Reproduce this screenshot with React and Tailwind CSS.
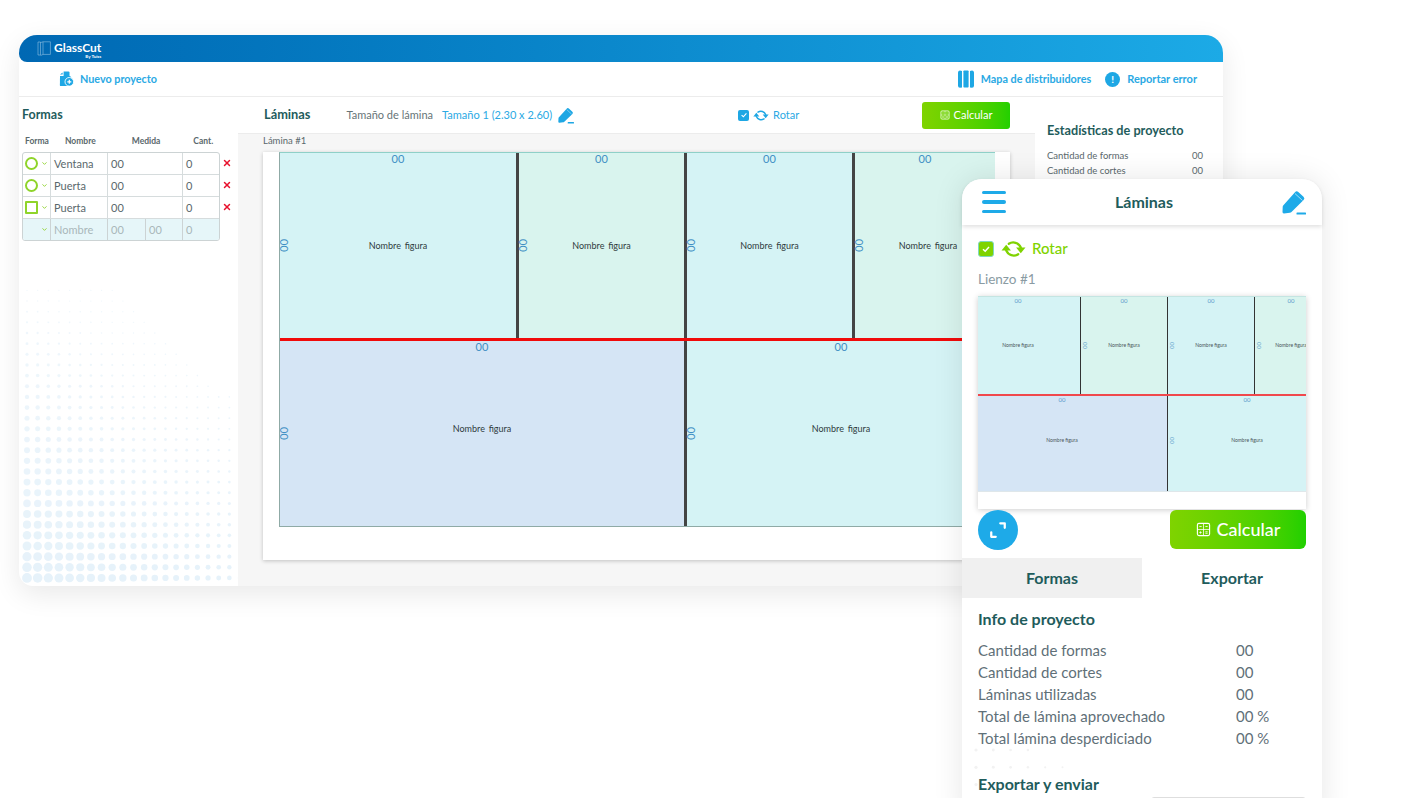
import { ChevronDown, X } from 'lucide-react';

const lato = "font-['Lato','Noto_Sans',sans-serif]";

const stats = [
  ['Cantidad de formas', '00'],
  ['Cantidad de cortes', '00'],
  ['Láminas utilizadas', '00'],
  ['Total de lámina aprovechado', '00 %'],
  ['Total lámina desperdiciado', '00 %'],
];

const shapes = [
  { kind: 'circle', name: 'Ventana' },
  { kind: 'circle', name: 'Puerta' },
  { kind: 'square', name: 'Puerta' },
];

const CYAN = 'bg-[#d5f3f5]';
const MINT = 'bg-[#d9f4ee]';
const BLUE = 'bg-[#d5e5f5]';

function Pencil({ className }) {
  return (
    <svg viewBox="0 0 24 25" className={className} fill="currentColor">
      <path d="M13 2.2a2.4 2.4 0 0 1 3.3-.1l5.2 4.6a2.4 2.4 0 0 1 .1 3.4L9.5 22a2.5 2.5 0 0 1-1.7.8L2 23.4a1.4 1.4 0 0 1-1.5-1.4L.7 17a2.5 2.5 0 0 1 .7-1.7Z" />
      <path d="M13 3.6l7.4 6.8" stroke="#fff" strokeWidth="0.6" />
      <rect x="14.5" y="22.4" width="9.5" height="2.2" rx="0.6" />
    </svg>
  );
}

function Rotate({ className }) {
  return (
    <svg viewBox="0 0 24 19" className={className} fill="none" stroke="currentColor" strokeWidth="2.2" strokeLinecap="round">
      <path d="M7.5 4.5A7.8 7.8 0 0 1 19 8" />
      <path d="M16.5 14.5A7.8 7.8 0 0 1 5 11" />
      <path d="M14.5 8h9L19 13.5Z" fill="currentColor" stroke="none" />
      <path d="M.5 11h9L5 5.5Z" fill="currentColor" stroke="none" />
    </svg>
  );
}

function CalcIcon({ className }) {
  return (
    <svg viewBox="0 0 16 16" className={className} fill="none" stroke="currentColor" strokeWidth="1.2">
      <rect x="1.5" y="1.5" width="13" height="13" rx="1.6" />
      <path d="M8 1.5v13M1.5 8h13" strokeWidth="0.8" />
      <path d="M3.6 4.8h2.4M10 4.8h2.4M3.6 11.2h2.4M4.8 10v2.4M10 10.4h2.4M10 12h2.4" strokeWidth="0.9" />
    </svg>
  );
}

function Logo() {
  return (
    <svg viewBox="0 0 14 16" className="w-[14px] h-[16px]" fill="none" stroke="#cfe6f5" strokeWidth="0.6" opacity="0.7">
      <path d="M1 1h2.5v13H1zM3.5 1.6 6 .8h7.4v12.6H6L3.5 14.6" />
      <path d="M6 .8v12.6" />
    </svg>
  );
}

function NewProject() {
  return (
    <svg viewBox="0 0 15 16" className="w-[15px] h-[16px]">
      <path d="M1 3.6h2.6V1.4L1 3.6Z" fill="#1ea7e4" />
      <path d="M4.6.5h4.9a1 1 0 0 1 1 1v3.4H4.6Z" fill="#1ea7e4" />
      <path d="M1 4.9h9.5a1.6 1.6 0 0 1 1.6 1.6v8.6H1.8a.9.9 0 0 1-.9-.9Z" fill="#1ea7e4" />
      <circle cx="10.3" cy="10.8" r="4.3" fill="#1ea7e4" stroke="#fff" strokeWidth="0.9" />
      <path d="M10.3 8.8v4M8.3 10.8h4" stroke="#fff" strokeWidth="1.2" />
    </svg>
  );
}

function MapIcon() {
  return (
    <svg viewBox="0 0 18 18" className="w-[18px] h-[18px]" fill="#1ea7e4">
      <path d="M3 .6 5 1v16.4l-2 .4a2 2 0 0 1-2-2V2.4a2 2 0 0 1 2-1.8Z" />
      <rect x="6.4" y="0.4" width="5.2" height="17.2" rx="0.8" />
      <path d="M15 .6 13 1v16.4l2 .4a2 2 0 0 0 2-2V2.4a2 2 0 0 0-2-1.8Z" />
    </svg>
  );
}

// medio tono del panel izquierdo, generado para no dibujar punto por punto
function Halftone() {
  const dots = [];
  for (let row = 0; row < 28; row++) {
    for (let col = 0; col < 21; col++) {
      const t = row / 27;
      const u = col / 20;
      if (row < 10 && col > 8 + row) continue;
      const r = 0.6 + 4.3 * Math.pow(t, 1 + 1.2 * u) * (1 - 0.63 * u);
      dots.push(<circle key={`${row}-${col}`} cx={8 + col * 10.65} cy={4.4 + row * 10.65} r={r} fill="#e6f2fa" opacity={0.6 + 0.4 * t} />);
    }
  }
  return (
    <svg className="absolute left-0 bottom-0 w-[219px] h-[300px]" viewBox="0 0 219 300">
      {dots}
    </svg>
  );
}

function FaintDots() {
  const dots = [];
  for (let row = 0; row < 5; row++) {
    for (let col = 0; col < 10; col++) {
      if (col > 3 + row * 2) continue;
      dots.push(<circle key={`${row}-${col}`} cx={3 + col * 17.3} cy={3 + row * 17.3} r={Math.max(0.5, 1.6 - col * 0.12)} fill="#f2f2f2" />);
    }
  }
  return (
    <svg className="absolute left-[11px] bottom-0 w-[180px] h-[72px]" viewBox="0 0 180 72">
      {dots}
    </svg>
  );
}

function Figure({ w, color, line, zero, lift = '', nameClass = '' }) {
  return (
    <div className={`relative shrink-0 h-full flex items-center justify-center ${color} ${line ? 'border-r-[3px] border-[#444]' : ''}`} style={{ width: w }}>
      <span className="absolute top-0 left-0 right-0 text-center text-[11px] leading-[11px] text-[#3f8fc4]">00</span>
      <span className={`whitespace-nowrap text-[9px] [word-spacing:1.5px] text-[#2f3b3d] ${lift} ${nameClass}`}>Nombre figura</span>
      {zero && <span className="absolute left-[-2px] rotate-90 text-[11px] leading-[11px] text-[#3f8fc4]">00</span>}
    </div>
  );
}

function ShapeRow({ kind, name }) {
  return (
    <div className="flex h-[22px] border-b border-[#d6dcdd] text-[11px] text-[#5a686c]">
      <div className="w-[28px] flex items-center pl-[2px] border-r border-[#d6dcdd]">
        <span className={`w-[13px] h-[13px] border-2 border-[#8fd42b] ${kind === 'circle' ? 'rounded-full' : 'rounded-[1px]'}`} />
        <ChevronDown className="w-[7px] h-[7px] ml-[3px] text-[#8fd42b]" strokeWidth={3} />
      </div>
      <div className="w-[57px] flex items-center pl-[3px] pt-[1px] border-r border-[#d6dcdd]">{name}</div>
      <div className="w-[75px] flex items-center pl-[3px] pt-[1px] border-r border-[#d6dcdd]">00</div>
      <div className="flex-1 flex items-center pl-[3px] pt-[1px]">0</div>
    </div>
  );
}

function Desktop() {
  return (
    <div className="absolute left-[19px] top-[35px] w-[1204px] h-[551px] flex flex-col rounded-t-[18px] rounded-b-[14px] bg-white shadow-[0_8px_28px_rgba(0,0,0,0.09)]">
      <header className="h-[27px] shrink-0 flex items-center pl-[18px] rounded-t-[18px] rounded-bl-[8px] bg-gradient-to-r from-[#0068b3] to-[#1caae6]">
        <Logo />
        <div className="ml-[3px] flex flex-col text-white leading-none">
          <span className="text-[12px] font-bold leading-[13px] mt-[3px]">GlassCut</span>
          <span className="text-[4.5px] font-bold text-right leading-[5px]">By Tuiss</span>
        </div>
      </header>

      <nav className="h-[35px] shrink-0 flex items-center pl-[40px] pr-[26px] border-b border-[#ececec] text-[10.8px] font-bold text-[#2aa9e4]">
        <NewProject />
        <span className="ml-[6px]">Nuevo proyecto</span>
        <div className="ml-auto flex items-center">
          <MapIcon />
          <span className="ml-[6px]">Mapa de distribuidores</span>
          <span className="ml-[14px] w-[15px] h-[15px] rounded-full bg-[#1ea7e4] text-white flex items-center justify-center text-[10px]">!</span>
          <span className="ml-[7px] text-[11px]">Reportar error</span>
        </div>
      </nav>

      <div className="flex-1 flex min-h-0">
        <aside className="relative w-[219px] shrink-0 rounded-bl-[14px] overflow-hidden">
          <Halftone />
          <div className="relative pl-[3px]">
            <h2 className="mt-[9px] text-[12.5px] leading-[17px] font-bold text-[#1f5c5c]">Formas</h2>
            <div className="mt-[11px] h-[14px] relative text-[8.5px] font-bold text-[#5a686c] flex items-center">
              <span className="ml-[3px]">Forma</span>
              <span className="ml-[16px]">Nombre</span>
              <span className="ml-[36px]">Medida</span>
              <span className="ml-[33px]">Cant.</span>
            </div>
            <div className="mt-[4px] flex">
              <div className="w-[198px] border border-[#ccd3d4] rounded-[3px] overflow-hidden">
                {shapes.map((s, i) => (
                  <ShapeRow key={i} {...s} />
                ))}
                <div className="flex h-[21px] bg-[#e6f6f9] text-[11px] text-[#a9b6ba]">
                  <div className="w-[28px] flex items-center pl-[18px] border-r border-[#ccd3d4]">
                    <ChevronDown className="w-[7px] h-[7px] text-[#8fd42b]" strokeWidth={3} />
                  </div>
                  <div className="w-[57px] flex items-center pl-[3px] pt-[1px] border-r border-[#ccd3d4]">Nombre</div>
                  <div className="w-[38px] flex items-center pl-[3px] pt-[1px] border-r border-[#ccd3d4]">00</div>
                  <div className="w-[37px] flex items-center pl-[3px] pt-[1px] border-r border-[#ccd3d4]">00</div>
                  <div className="flex-1 flex items-center pl-[3px] pt-[1px]">0</div>
                </div>
              </div>
              <div className="flex flex-col ml-[1px]">
                {shapes.map((_, i) => (
                  <span key={i} className="h-[22px] w-[12px] flex items-center justify-center">
                    <X className="w-[10px] h-[10px] text-[#e8112d]" strokeWidth={3.5} />
                  </span>
                ))}
              </div>
            </div>
          </div>
        </aside>

        <main className="w-[797px] shrink-0 flex flex-col">
          <div className="h-[37px] shrink-0 flex items-center pl-[26px] pr-[25px] border-b border-[#ececec] bg-white">
            <span className="text-[12.8px] font-bold text-[#1f5c5c]">Láminas</span>
            <span className="ml-[36px] text-[11px] text-[#667477]">Tamaño de lámina</span>
            <span className="ml-[9px] text-[11px] text-[#2aa9e4]">Tamaño 1 (2.30 x 2.60)</span>
            <Pencil className="ml-[6px] w-[16px] h-[17px] text-[#1ea7e4]" />
            <span className="ml-[164px] w-[11px] h-[11px] rounded-[2px] bg-[#1ea7e4] flex items-center justify-center">
              <svg viewBox="0 0 10 10" className="w-[8px] h-[8px]" fill="none" stroke="#fff" strokeWidth="1.4"><path d="M2 5.2 4.2 7.2 8 3" /></svg>
            </span>
            <Rotate className="ml-[4px] w-[16px] h-[13px] text-[#1ea7e4]" />
            <span className="ml-[4px] text-[11px] text-[#2aa9e4]">Rotar</span>
            <button className="ml-auto w-[88px] h-[27px] rounded-[3px] flex items-center justify-center gap-[4px] text-white text-[11px] bg-gradient-to-r from-[#7fd300] to-[#22d000]">
              <CalcIcon className="w-[10px] h-[10px]" />
              Calcular
            </button>
          </div>
          <div className="flex-1 bg-[#f6f6f6] pl-[25px] flex flex-col">
            <div className="h-[18px] text-[9.5px] leading-[14px] text-[#5a686c]">Lámina #1</div>
            <div className="w-[747px] h-[408px] bg-white shadow-[0_1px_4px_rgba(0,0,0,0.22)] pl-[16px]">
              <div className="w-[716px] h-[375px] flex flex-col border-t border-t-[#8fd0c8] border-l border-b border-[#8faaa6] overflow-hidden">
                <div className="flex h-[185px]">
                  <Figure w={239} color={CYAN} line zero />
                  <Figure w={168} color={MINT} line zero />
                  <Figure w={168} color={CYAN} line zero />
                  <Figure w={140} color={MINT} zero nameClass="ml-[6px]" />
                </div>
                <div className="h-[3px] bg-[#f00a0a] shrink-0" />
                <div className="flex h-[185px]">
                  <Figure w={407} color={BLUE} line zero lift="-mt-[10px]" />
                  <Figure w={308} color={CYAN} zero lift="-mt-[10px]" />
                </div>
              </div>
            </div>
          </div>
        </main>

        <aside className="flex-1 pl-[12px] pr-[20px] pt-[25px]">
          <h3 className="text-[12.7px] leading-[16px] font-bold text-[#1f5c5c]">Estadísticas de proyecto</h3>
          <div className="mt-[10px] text-[9.5px] text-[#5a686c]">
            {stats.slice(0, 2).map(([label, value]) => (
              <div key={label} className="flex justify-between h-[15px] leading-[15px]">
                <span>{label}</span>
                <span>{value}</span>
              </div>
            ))}
          </div>
        </aside>
      </div>
    </div>
  );
}

function MiniFigure({ w, color, line, zero, pad = '', zeroPos = 'right-0' }) {
  return (
    <div className={`relative shrink-0 h-full flex items-center justify-center ${pad} ${color} ${line ? 'border-r border-[#333]' : ''}`} style={{ width: w }}>
      <span className={`absolute top-0 left-0 ${zeroPos} text-center text-[6px] leading-[7px] text-[#5a9ccb]`}>00</span>
      <span className="whitespace-nowrap text-[5px] text-[#4a5658]">Nombre figura</span>
      {zero && <span className="absolute left-[1px] rotate-90 text-[6px] text-[#5a9ccb]">00</span>}
    </div>
  );
}

function Phone() {
  return (
    <div className="absolute left-[962px] top-[179px] w-[360px] h-[640px] bg-white rounded-t-[20px] shadow-[0_0_30px_rgba(0,0,0,0.1)]">
      <FaintDots />
      <div className="relative h-[46px] flex items-center justify-between pl-[20px] pr-[16px] rounded-t-[20px] bg-white shadow-[0_2px_4px_rgba(0,0,0,0.12)]">
        <div className="w-[24px] flex flex-col gap-[6px]">
          <span className="h-[3.5px] rounded-full bg-[#1eaae8]" />
          <span className="h-[3.5px] rounded-full bg-[#1eaae8]" />
          <span className="h-[3.5px] rounded-full bg-[#1eaae8]" />
        </div>
        <span className="text-[16px] font-bold text-[#1f5c5c]">Láminas</span>
        <Pencil className="w-[24px] h-[25px] text-[#1eaae8]" />
      </div>

      <div className="relative px-[16px]">
        <div className="mt-[15px] h-[17px] flex items-center">
          <span className="w-[16px] h-[16px] rounded-[3px] bg-[#7fd300] border border-[#7fd8c0] flex items-center justify-center">
            <svg viewBox="0 0 10 10" className="w-[10px] h-[10px]" fill="none" stroke="#fff" strokeWidth="1.5"><path d="M2 5.2 4.2 7.2 8 3" /></svg>
          </span>
          <Rotate className="ml-[7px] w-[25px] h-[20px] text-[#7fd300]" />
          <span className="ml-[6px] text-[15px] font-medium text-[#7fd300]">Rotar</span>
        </div>
        <div className="mt-[13px] h-[18px] text-[13.5px] leading-[18px] text-[#8a9ba3]">Lienzo #1</div>
        <div className="mt-[8px] w-[328px] h-[213px] bg-white shadow-[0_1px_6px_rgba(0,0,0,0.2)] overflow-hidden">
          <div className="h-[196px] border-t border-t-[#c4e5e2] border-b border-b-[#dfe7ea]">
            <div className="flex h-[97px] w-[360px]">
              <MiniFigure w={103} color={CYAN} line pad="pr-[22px]" zeroPos="right-[22px]" />
              <MiniFigure w={87} color={MINT} line zero />
              <MiniFigure w={87} color={CYAN} line zero />
              <MiniFigure w={72} color={MINT} zero />
            </div>
            <div className="h-[2px] bg-[#f0484c]" />
            <div className="flex h-[95px] w-[360px]">
              <MiniFigure w={190} color={BLUE} line pad="pr-[21px] pb-[6px]" zeroPos="right-[21px]" />
              <MiniFigure w={158} color={CYAN} zero pad="pb-[6px]" />
            </div>
          </div>
        </div>
        <div className="mt-[1px] flex justify-between">
          <span className="w-[40px] h-[40px] rounded-full bg-[#1eaae8] flex items-center justify-center">
            <svg viewBox="0 0 16 16" className="w-[18px] h-[18px]" fill="none" stroke="#fff" strokeWidth="2" strokeLinecap="round" strokeLinejoin="round">
              <path d="M10 2h4v4M2 10v4h4" />
            </svg>
          </span>
          <button className="w-[136px] h-[39px] rounded-[6px] flex items-center justify-center gap-[6px] text-white text-[18px] font-medium bg-gradient-to-r from-[#7fd300] to-[#1fd000]">
            <CalcIcon className="w-[15px] h-[15px]" />
            Calcular
          </button>
        </div>
      </div>

      <div className="relative mt-[8px] h-[40px] flex text-[16px] font-bold text-[#1f5c5c]">
        <div className="w-[180px] bg-[#f0f0f0] flex items-center justify-center">Formas</div>
        <div className="w-[180px] flex items-center justify-center">Exportar</div>
      </div>

      <div className="relative px-[16px]">
        <h3 className="mt-[11px] h-[20px] text-[16px] leading-[20px] font-bold text-[#1f5c5c]">Info de proyecto</h3>
        <div className="mt-[10px] text-[15px] text-[#5f7078]">
          {stats.map(([label, value]) => (
            <div key={label} className="flex h-[22px] leading-[22px]">
              <span className="w-[258px]">{label}</span>
              <span>{value}</span>
            </div>
          ))}
        </div>
        <h3 className="mt-[25px] h-[20px] text-[16px] leading-[20px] font-bold text-[#1f5c5c]">Exportar y enviar</h3>
        <div className="mt-[3px] ml-[173px] w-[155px] h-[40px] rounded-[3px] border border-[#dedede]" />
      </div>
    </div>
  );
}

export default function App() {
  return (
    <div className={`relative w-[1420px] h-[798px] overflow-hidden bg-white ${lato}`}>
      <Desktop />
      <Phone />
    </div>
  );
}
